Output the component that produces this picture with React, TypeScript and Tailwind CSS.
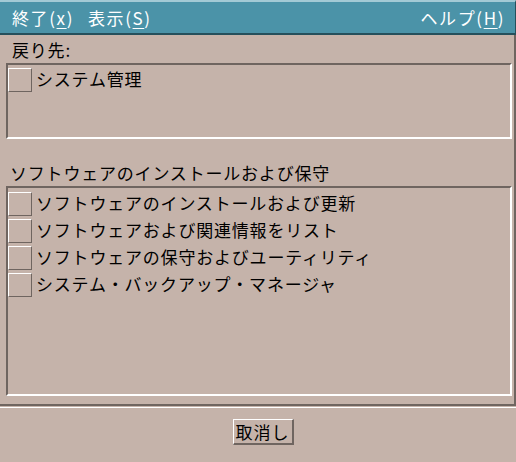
const jp = { fontFamily: '"Noto Sans CJK JP", "DejaVu Sans", sans-serif' };

function Mnemonic({ label, letter }: { label: string; letter: string }) {
  return (
    <span className="whitespace-nowrap">
      {label}(<span className="underline underline-offset-[3px]">{letter}</span>)
    </span>
  );
}

function Row({ text }: { text: string }) {
  return (
    <div className="flex items-center h-[27px]">
      <div className="w-[24px] h-[24px] border-t border-l border-t-white border-l-white border-b border-r border-b-[#6f6560] border-r-[#6f6560] shrink-0" />
      <span className="ml-[4px] -mt-[2px] text-[17px] tracking-[0.8px] text-black leading-none">{text}</span>
    </div>
  );
}

export default function App() {
  const software = [
    "ソフトウェアのインストールおよび更新",
    "ソフトウェアおよび関連情報をリスト",
    "ソフトウェアの保守およびユーティリティ",
    "システム・バックアップ・マネージャ",
  ];

  return (
    <div className="w-[516px] h-[462px] bg-[#c5b3aa] flex flex-col overflow-hidden" style={jp}>
      <div className="h-[35px] shrink-0 bg-[#4b93a8] border-t-2 border-t-[#a3cad5] border-b-2 border-b-[#25505c] border-r border-r-[#25505c] flex items-center pl-[12px] pr-[10px] text-white text-[17px] tracking-[1.6px]">
        <Mnemonic label="終了" letter="x" />
        <span className="ml-[14px]">
          <Mnemonic label="表示" letter="S" />
        </span>
        <span className="ml-auto">
          <Mnemonic label="ヘルプ" letter="H" />
        </span>
      </div>

      <div className="h-[371px] shrink-0 border-r-2 border-b-2 border-[#6f6560] pl-[6px] pr-[2px] flex flex-col">
        <div className="h-[22px] mt-[4px] flex items-center px-[6px] text-[17px] tracking-[0.8px] text-black">
          戻り先:
        </div>
        <div className="mt-[2px] h-[76px] border-t-2 border-l-2 border-[#6f6560] border-b-2 border-r-2 border-b-white border-r-white pt-[1px]">
          <Row text="システム管理" />
        </div>
        <div className="h-[22px] mt-[23px] flex items-center px-[4px] text-[17px] tracking-[0.8px] text-black">
          ソフトウェアのインストールおよび保守
        </div>
        <div className="mt-[2px] h-[210px] border-t-2 border-l-2 border-[#6f6560] border-b-2 border-r-2 border-b-white border-r-white pt-[2px]">
          {software.map((s) => (
            <Row key={s} text={s} />
          ))}
        </div>
      </div>

      <div className="flex-1 border-t border-t-white mt-[1px] flex items-start justify-center pt-[11px] pl-[10px]">
        <button className="h-[26px] w-[61px] border-t border-l border-white border-b-2 border-r-2 border-b-[#6f6560] border-r-[#6f6560] text-[17px] tracking-[1px] text-black leading-none bg-[#c5b3aa]">
          取消し
        </button>
      </div>
    </div>
  );
}
